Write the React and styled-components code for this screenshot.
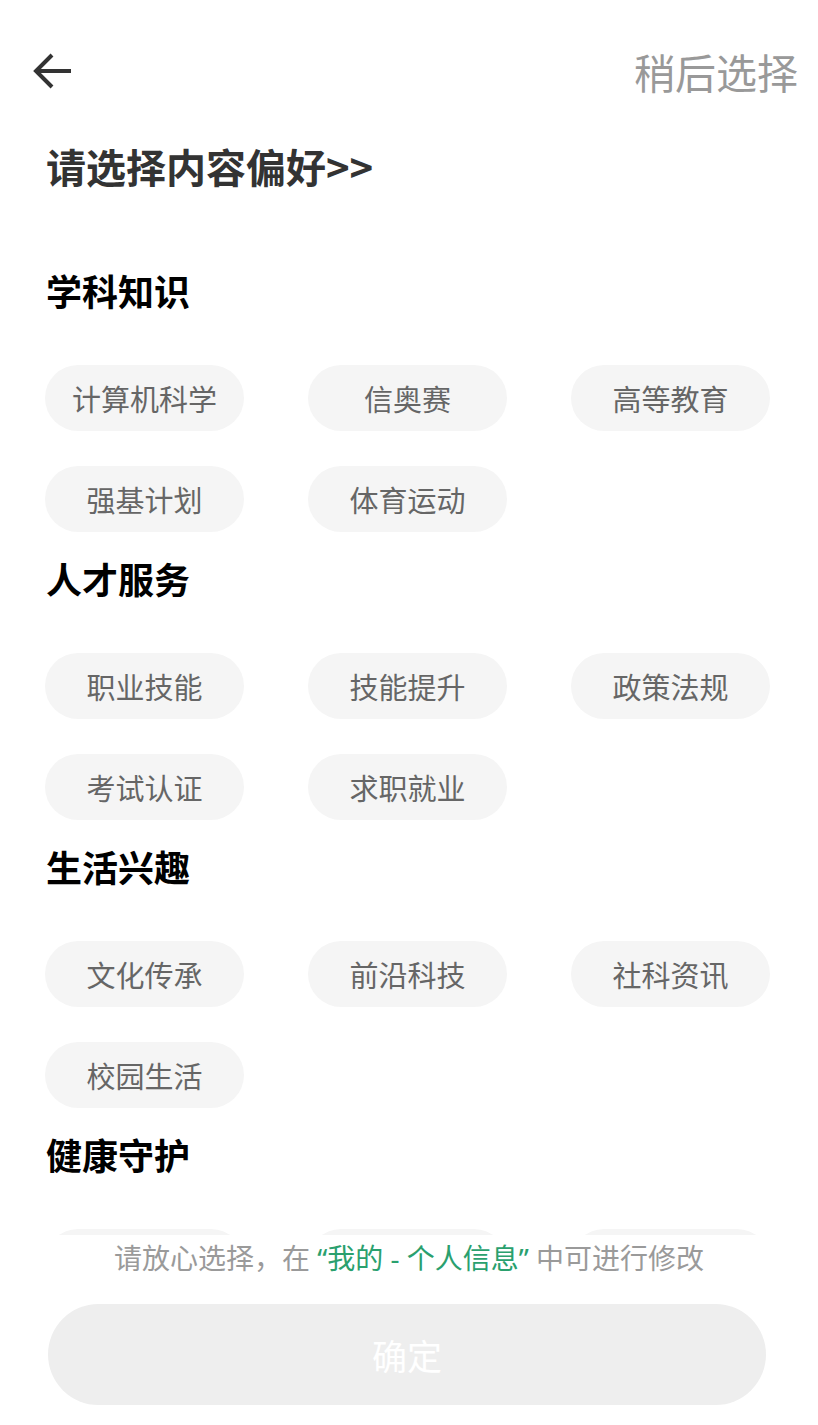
import React from "react";
import styled, { createGlobalStyle } from "styled-components";

const sections = [
	{ title: "学科知识", tags: ["计算机科学", "信奥赛", "高等教育", "强基计划", "体育运动"] },
	{ title: "人才服务", tags: ["职业技能", "技能提升", "政策法规", "考试认证", "求职就业"] },
	{ title: "生活兴趣", tags: ["文化传承", "前沿科技", "社科资讯", "校园生活"] },
	{ title: "健康守护", tags: ["心理健康", "运动健身", "营养膳食"] }
];

export default function App() {
	return (
		<>
			<GlobalStyle />
			<Page>
				<Header>
					<BackButton>
						<svg width="40" height="40" viewBox="0 0 40 40" fill="none">
							<path
								d="M38 20H4M19 4L3 20L19 36"
								stroke="#333"
								strokeWidth="4"
								strokeLinejoin="miter"
							/>
						</svg>
					</BackButton>
					<LaterLink>稍后选择</LaterLink>
				</Header>

				<Title>请选择内容偏好&gt;&gt;</Title>

				{sections.map(section => (
					<Section key={section.title}>
						<SectionTitle>{section.title}</SectionTitle>
						<TagGrid>
							{section.tags.map(tag => (
								<Tag key={tag}>{tag}</Tag>
							))}
						</TagGrid>
					</Section>
				))}
			</Page>

			<Footer>
				<Hint>
					请放心选择，在 <HintLink>“我的 - 个人信息”</HintLink> 中可进行修改
				</Hint>
				<ConfirmButton>确定</ConfirmButton>
			</Footer>
		</>
	);
}

// styled components -------------------------

const GlobalStyle = createGlobalStyle`
	html, body {
		margin: 0;
		padding: 0;
		background: #fff;
		font-family: "Noto Sans CJK SC", "Noto Sans", sans-serif;
	}
`;

const Page = styled.div`
	padding: 0 48px 260px 46px;
`;

const Header = styled.header`
	display: flex;
	align-items: center;
	justify-content: space-between;
	height: 62px;
	padding-top: 40px;
	margin-right: -28px;
`;

const BackButton = styled.div`
	display: flex;
	margin-left: -13px;
	width: 40px;
	height: 40px;
`;

const LaterLink = styled.div`
	font-size: 41px;
	line-height: 1;
	color: #999;
`;

const Title = styled.h1`
	margin: 42px 0 0 0;
	font-size: 40px;
	line-height: 1.1;
	font-weight: 700;
	color: #333;
`;

const Section = styled.section`
	&:first-of-type {
		margin-top: 56px;
	}
`;

const SectionTitle = styled.h2`
	margin: 0;
	padding-top: 28px;
	font-size: 36px;
	line-height: 36px;
	font-weight: 700;
	color: #000;
`;

const TagGrid = styled.div`
	display: grid;
	grid-template-columns: repeat(3, 199px);
	column-gap: 64px;
	row-gap: 35px;
	margin-top: 57px;
	margin-left: -1px;
`;

const Tag = styled.div`
	display: flex;
	align-items: center;
	justify-content: center;
	height: 66px;
	border-radius: 33px;
	background: #f5f5f5;
	color: #666;
	font-size: 29px;
`;

const Footer = styled.footer`
	position: fixed;
	left: 0;
	right: 0;
	bottom: 0;
	height: 190px;
	background: #fff;
	display: flex;
	flex-direction: column;
	align-items: center;
`;

const Hint = styled.p`
	margin: 6px 0 0 0;
	font-family: "Noto Sans", "Noto Sans CJK SC", sans-serif;
	font-size: 28px;
	line-height: 34px;
	color: #9a9a9a;
`;

const HintLink = styled.span`
	color: #2aa06e;
`;

const ConfirmButton = styled.div`
	display: flex;
	align-items: center;
	justify-content: center;
	width: 718px;
	height: 101px;
	margin-top: 29px;
	margin-left: -4px;
	border-radius: 51px;
	background: #eee;
	color: #fff;
	font-size: 35px;
`;

// -------------------------------------------
